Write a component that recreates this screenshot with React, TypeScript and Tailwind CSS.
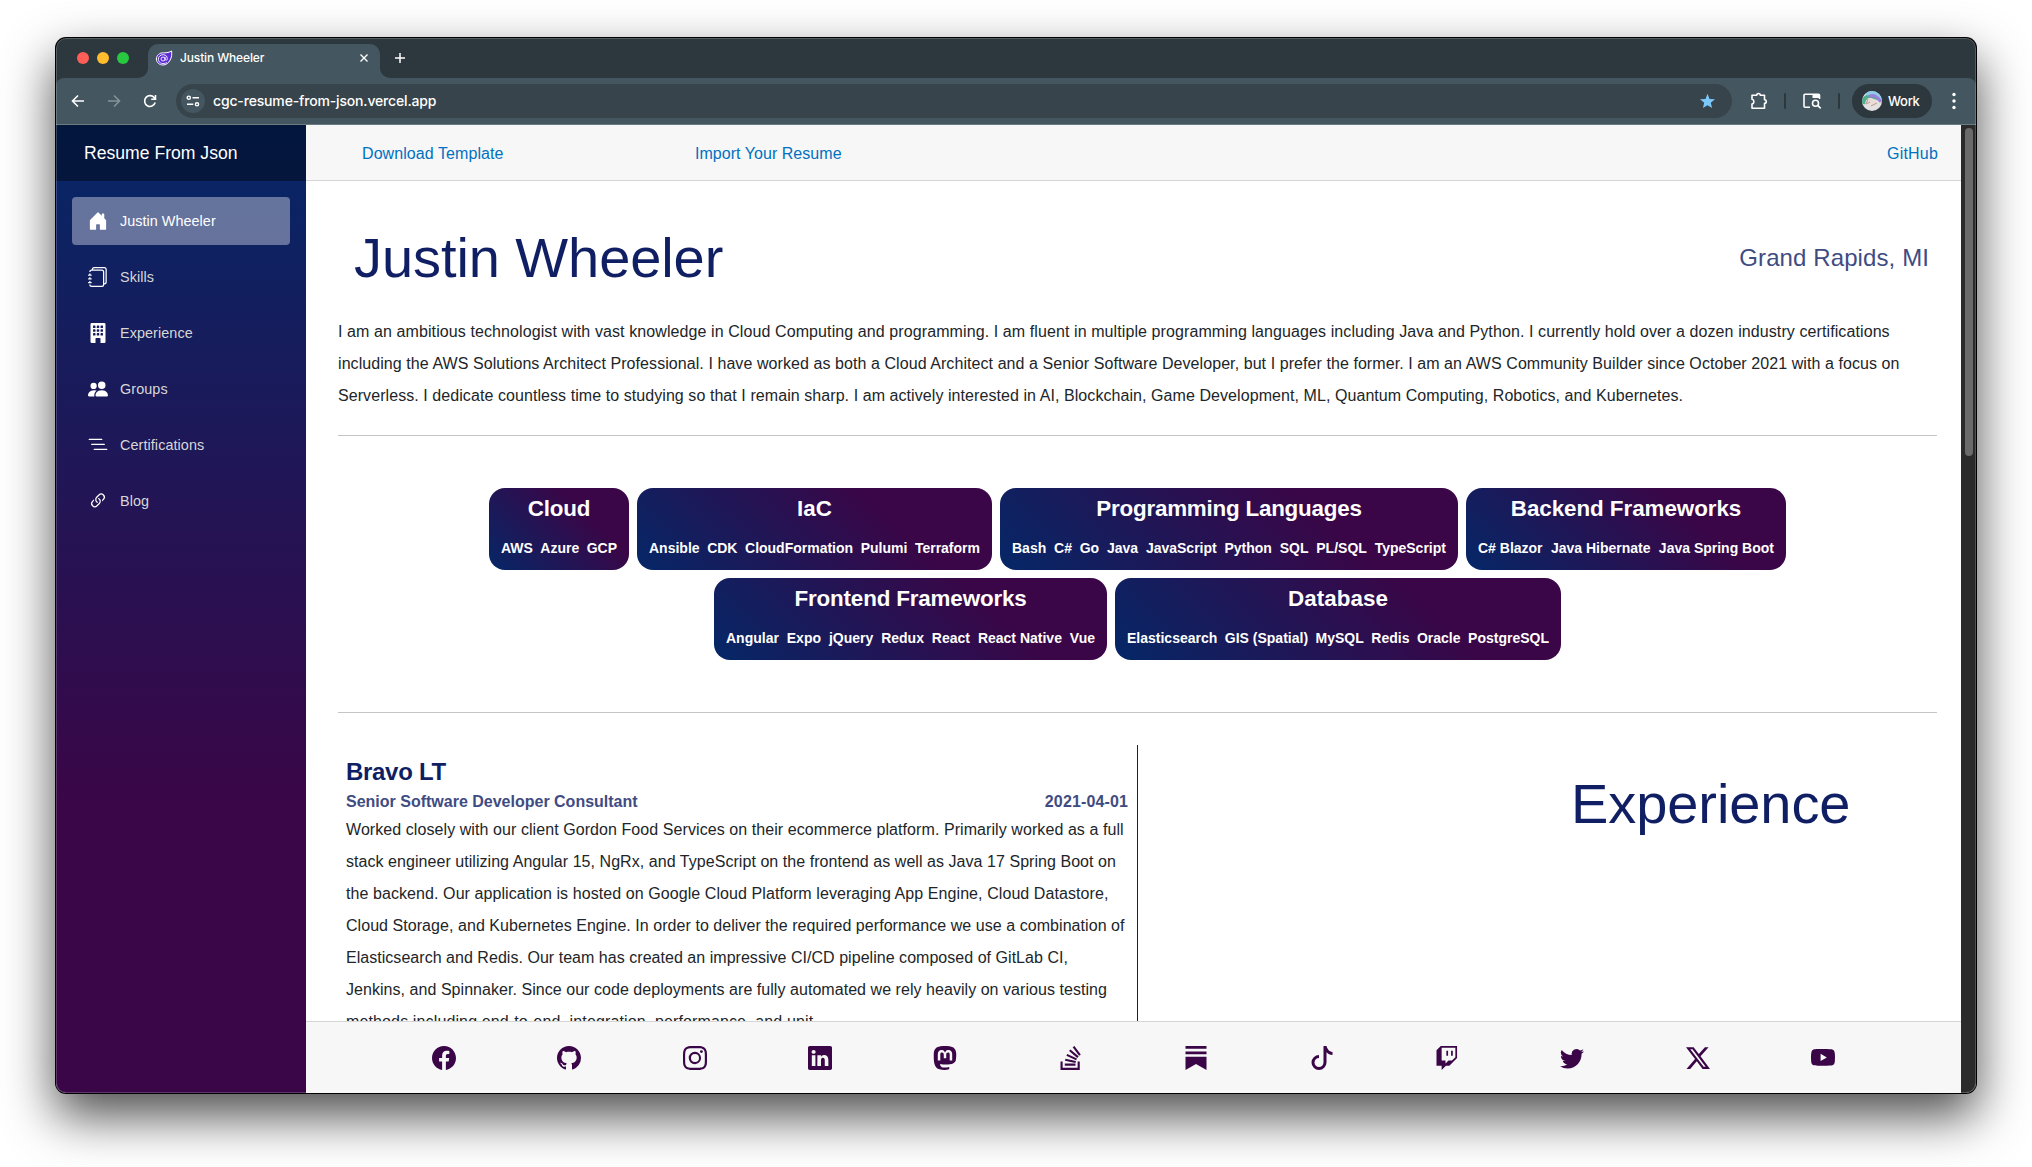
import React from "react";
import {
  BsHouseDoorFill, BsJournals, BsBuildingFill, BsPeopleFill, BsListNested, BsLink45Deg,
  BsFacebook, BsGithub, BsInstagram, BsLinkedin, BsMastodon, BsStackOverflow,
  BsSubstack, BsTiktok, BsTwitch, BsTwitter, BsTwitterX, BsYoutube,
} from "react-icons/bs";

const navItems = [
  { label: "Justin Wheeler", Icon: BsHouseDoorFill, active: true },
  { label: "Skills", Icon: BsJournals },
  { label: "Experience", Icon: BsBuildingFill },
  { label: "Groups", Icon: BsPeopleFill },
  { label: "Certifications", Icon: BsListNested },
  { label: "Blog", Icon: BsLink45Deg },
];

const socials = [
  BsFacebook, BsGithub, BsInstagram, BsLinkedin, BsMastodon, BsStackOverflow,
  BsSubstack, BsTiktok, BsTwitch, BsTwitter, BsTwitterX, BsYoutube,
];

const skillRows = [
  [
    { title: "Cloud", width: "w-[140px]", track: "tracking-[-0.2px]", skills: ["AWS", "Azure", "GCP"] },
    { title: "IaC", width: "w-[355px]", track: "", skills: ["Ansible", "CDK", "CloudFormation", "Pulumi", "Terraform"] },
    { title: "Programming Languages", width: "w-[458px]", track: "tracking-[-0.22px]", skills: ["Bash", "C#", "Go", "Java", "JavaScript", "Python", "SQL", "PL/SQL", "TypeScript"] },
    { title: "Backend Frameworks", width: "w-[320px]", track: "tracking-[-0.06px]", skills: ["C# Blazor", "Java Hibernate", "Java Spring Boot"] },
  ],
  [
    { title: "Frontend Frameworks", width: "w-[393px]", track: "tracking-[-0.16px]", skills: ["Angular", "Expo", "jQuery", "Redux", "React", "React Native", "Vue"] },
    { title: "Database", width: "w-[446px]", track: "tracking-[0.05px]", skills: ["Elasticsearch", "GIS (Spatial)", "MySQL", "Redis", "Oracle", "PostgreSQL"] },
  ],
];

function BlazorIcon() {
  return (
    <svg width="18" height="18" viewBox="0 0 18 18" fill="none">
      <path d="M16.600 2c.3 3.300.2 6.200-1.400 9-1.600 3-4.100 5-7.200 5-3.800 0-6.600-2.600-6.600-6 0-3.700 3.300-6.500 7.300-6.200 3.100.1 5.700-.4 7.900-1.800z" fill="#5b2bd8" stroke="#fff" strokeWidth="1" />
      <path d="M11.500 13.700c-2.800 1.900-7.900 1-8.200-3.400-.1-3 2.600-4.700 5-4.600 2.600.1 4.100 1.900 4 4.100 0 1.800-2.200 1.900-2.200.3V8.200" stroke="#fff" strokeWidth=".9" strokeLinecap="round" />
      <circle cx="8" cy="10" r="2" stroke="#fff" strokeWidth=".9" />
    </svg>
  );
}

function TabStrip() {
  return (
    <div className="flex h-10 bg-[#2c373e]">
      <div className="flex h-10 w-[82px] items-center gap-2 pl-[21px]">
        <span className="size-3 shrink-0 rounded-full bg-[#ff5f57]" />
        <span className="size-3 shrink-0 rounded-full bg-[#febc2e]" />
        <span className="size-3 shrink-0 rounded-full bg-[#28c840]" />
      </div>
      <svg className="mt-[30px] shrink-0" width="10" height="10"><path d="M10 0A10 10 0 0 1 0 10H10z" fill="#44565f" /></svg>
      <div className="mt-[6px] flex h-[34px] w-[232px] items-center rounded-t-[10px] bg-[#44565f] pb-[6px] pl-[7px] pr-[12px]">
        <BlazorIcon />
        <span className="ml-[7px] flex-1 text-[12px] font-medium tracking-[-0.14px] text-white">Justin Wheeler</span>
        <svg width="8" height="8" viewBox="0 0 8 8" stroke="#fff" strokeWidth="1.4"><path d="M.5.5l7 7M7.500.5l-7 7" /></svg>
      </div>
      <svg className="mt-[30px] shrink-0" width="10" height="10"><path d="M0 0A10 10 0 0 0 10 10H0z" fill="#44565f" /></svg>
      <svg className="ml-[5px] mt-[15px]" width="10" height="10" viewBox="0 0 10 10" stroke="#fff" strokeWidth="1.500"><path d="M5 0v10M0 5h10" /></svg>
    </div>
  );
}

function Toolbar() {
  return (
    <div className="bg-[#2c373e]">
      <div className="flex h-[47px] items-center rounded-t-[8px] border-b border-[#6c7a81] bg-[#44565f] text-white">
        <svg className="ml-[15px] shrink-0" width="14" height="14" viewBox="0 0 14 14" fill="none" stroke="#fff" strokeWidth="1.600"><path d="M13 7H2M7 1.500L1.500 7 7 12.500" /></svg>
        <svg className="ml-[22px] shrink-0" width="14" height="14" viewBox="0 0 14 14" fill="none" stroke="#87939a" strokeWidth="1.600"><path d="M1 7h11M7 1.500L12.500 7 7 12.500" /></svg>
        <svg className="ml-[22px] shrink-0" width="14" height="14" viewBox="0 0 14 14" fill="none" stroke="#fff" strokeWidth="1.600"><path d="M12.200 8.600A5.400 5.400 0 1 1 11.500 4L12.400 5M12.500 1V5.300H8.200" /></svg>
        <div className="ml-[19px] flex h-[34px] w-[1556px] shrink-0 items-center rounded-full bg-[#38444b] pl-[5px] pr-[16px]">
          <span className="flex size-6 items-center justify-center rounded-full bg-[#44565f]">
            <svg width="14" height="12" viewBox="0 0 14 12" fill="none" stroke="#fff" strokeWidth="1.400">
              <circle cx="2.800" cy="2.700" r="1.600" /><path d="M6.500 2.700h6.500M1 9.300h6.300" /><circle cx="11" cy="9.300" r="1.600" />
            </svg>
          </span>
          <span className="mb-px ml-[8px] flex-1 text-[14px] font-medium tracking-[-0.16px]">cgc-resume-from-json.vercel.app</span>
          <svg width="17" height="17" viewBox="0 0 17 17"><path d="M8.500 .8l2 5.100 5.500.4-4.200 3.500 1.300 5.300-4.600-2.900-4.600 2.900 1.300-5.300L1 6.300l5.500-.4z" fill="#7cc8f8" /></svg>
        </div>
        <svg className="ml-[18px] shrink-0" width="18" height="18" viewBox="0 0 18 18" fill="none" stroke="#fff" strokeWidth="1.600" strokeLinejoin="round">
          <path d="M2 3.300h4.700a1.800 1.800 0 0 1 3.600 0h4.200v4.500a1.800 1.800 0 0 1 0 3.600v4.800H2v-4.200a2.400 2.400 0 0 0 0-4.700z" />
        </svg>
        <span className="ml-[16px] h-4 w-[2px] shrink-0 rounded-full bg-[#2c373e]" />
        <svg className="ml-[16px] shrink-0" width="20" height="18" viewBox="0 0 20 18" fill="none" stroke="#fff" strokeWidth="1.600">
          <path d="M8 15.200H3a1 1 0 0 1-1-1V3.300a1 1 0 0 1 1-1h13.500a1 1 0 0 1 1 1V7" />
          <path d="M10.500 2.300h7V6h-7z" fill="#fff" stroke="none" />
          <circle cx="13.500" cy="11.200" r="3" /><path d="M15.700 13.400l3 3" />
        </svg>
        <span className="ml-[16px] h-4 w-[2px] shrink-0 rounded-full bg-[#2c373e]" />
        <div className="ml-[12px] flex h-[34px] w-[80px] shrink-0 items-center rounded-full bg-[#2c373e] pl-[10px]">
          <svg width="20" height="20" viewBox="0 0 20 20">
            <clipPath id="avatar"><circle cx="10" cy="10" r="10" /></clipPath>
            <g clipPath="url(#avatar)">
              <path fill="#e3e2e1" d="M0 0h20v20H0z" />
              <path d="M1 13C2 5 7 3 18 8" stroke="#4fae8b" strokeWidth="4" fill="none" />
              <path d="M4 3C9 0 15 1 20 9" stroke="#8ccbe9" strokeWidth="4" fill="none" />
              <path d="M7 6C11 3 15 5 19 11" stroke="#9b7fdc" strokeWidth="3" fill="none" />
              <path d="M5 8c3-2 7-1 11 5l-8 1z" fill="#ecdcd6" />
              <path d="M6 8l-2 5 4-2M9 15l6-3" stroke="#b79b90" strokeWidth="1" fill="none" />
            </g>
          </svg>
          <span className="ml-[6px] mt-px text-[13px] font-medium tracking-[-0.3px]">Work</span>
        </div>
        <svg className="ml-[20px] shrink-0" width="4" height="18" viewBox="0 0 4 18" fill="#fff"><circle cx="2" cy="2.500" r="1.700" /><circle cx="2" cy="9" r="1.700" /><circle cx="2" cy="15.500" r="1.700" /></svg>
      </div>
    </div>
  );
}

function Sidebar() {
  return (
    <aside className="w-[250px] shrink-0 bg-[linear-gradient(180deg,rgb(5,39,103)_0%,#3a0647_70%)]">
      <div className="flex h-14 items-center bg-black/40 pl-[28px] pt-px text-[17.6px] text-white">Resume From Json</div>
      <nav className="flex flex-col gap-2 px-4 pt-4">
        {navItems.map(({ label, Icon, active }) => (
          <a key={label} className={active ? "flex h-12 items-center rounded bg-white/37 pl-4 text-[14.4px] tracking-[0.04px] text-white" : "flex h-12 items-center rounded pl-4 text-[14.4px] tracking-[0.08px] text-[#d7d7d7]"}>
            <Icon className="mb-px mr-3 size-5 text-white" />
            <span className="pt-[2px]">{label}</span>
          </a>
        ))}
      </nav>
    </aside>
  );
}

function SkillCard({ title, width, track, skills }: { title: string; width: string; track: string; skills: string[] }) {
  return (
    <div className={`${width} h-[82px] rounded-2xl bg-[linear-gradient(45deg,rgb(5,39,103)_0%,#3a0647_70%)] pt-[7px] font-bold text-white`}>
      <h3 className={`${track} text-center text-[22.4px] leading-[27px]`}>{title}</h3>
      <div className="mt-3 flex justify-between whitespace-nowrap px-[12px] text-[14px] leading-[28px]">
        {skills.map((s) => <span key={s}>{s}</span>)}
      </div>
    </div>
  );
}

function Resume() {
  return (
    <article className="min-h-0 flex-1 overflow-hidden pl-8 pr-6 text-[#212529]">
      <header className="mt-[43px] flex h-[67px] items-center justify-between pl-[16px] pr-[8px]">
        <h1 className="text-[56px] leading-[67px] tracking-[-0.08px] text-[#101f63]">Justin Wheeler</h1>
        <span className="text-[24px] tracking-[0.1px] text-[#3f4c82]">Grand Rapids, MI</span>
      </header>
      <div className="mt-[25px] whitespace-nowrap text-[16px] leading-8">
        <p className="tracking-[0.095px]">I am an ambitious technologist with vast knowledge in Cloud Computing and programming. I am fluent in multiple programming languages including Java and Python. I currently hold over a dozen industry certifications</p>
        <p className="tracking-[0.071px]">including the AWS Solutions Architect Professional. I have worked as both a Cloud Architect and a Senior Software Developer, but I prefer the former. I am an AWS Community Builder since October 2021 with a focus on</p>
        <p className="tracking-[0.07px]">Serverless. I dedicate countless time to studying so that I remain sharp. I am actively interested in AI, Blockchain, Game Development, ML, Quantum Computing, Robotics, and Kubernetes.</p>
      </div>
      <hr className="mt-[23px] border-[#c4c5c6]" />
      <section className="mt-[52px] flex flex-col gap-2">
        {skillRows.map((row, i) => (
          <div key={i} className="flex justify-center gap-2">
            {row.map((card) => <SkillCard key={card.title} {...card} />)}
          </div>
        ))}
      </section>
      <hr className="mt-[52px] border-[#c4c5c6]" />
      <section className="mt-8 flex">
        <div className="h-[400px] w-[800px] border-r border-[#101f63] pl-2 pr-[9px] pt-[13px]">
          <h2 className="h-8 text-[24px] font-bold leading-[28.8px] tracking-[-0.3px] text-[#101f63]">Bravo LT</h2>
          <div className="flex justify-between text-[16px] font-bold leading-6 text-[#3f4c82]">
            <span>Senior Software Developer Consultant</span>
            <span className="tracking-[0.13px]">2021-04-01</span>
          </div>
          <div className="whitespace-nowrap text-[16px] leading-8">
            <p className="tracking-[0.074px]">Worked closely with our client Gordon Food Services on their ecommerce platform. Primarily worked as a full</p>
            <p className="tracking-[0.05px]">stack engineer utilizing Angular 15, NgRx, and TypeScript on the frontend as well as Java 17 Spring Boot on</p>
            <p className="tracking-[0.08px]">the backend. Our application is hosted on Google Cloud Platform leveraging App Engine, Cloud Datastore,</p>
            <p className="tracking-[0.053px]">Cloud Storage, and Kubernetes Engine. In order to deliver the required performance we use a combination of</p>
            <p className="tracking-[0.035px]">Elasticsearch and Redis. Our team has created an impressive CI/CD pipeline composed of GitLab CI,</p>
            <p className="tracking-[0.047px]">Jenkins, and Spinnaker. Since our code deployments are fully automated we rely heavily on various testing</p>
            <p className="tracking-[0.13px]">methods including end-to-end, integration, performance, and unit.</p>
          </div>
        </div>
        <h1 className="pl-[433px] pt-[25px] text-[56px] leading-[67px] tracking-[-0.08px] text-[#101f63]">Experience</h1>
      </section>
    </article>
  );
}

export default function App() {
  return (
    <div className="h-[1167px] w-[2032px] overflow-hidden bg-white pl-[55px] pt-[37px] font-['Inter',sans-serif]">
      <div className="h-[1057px] w-[1922px] rounded-[11px] bg-black p-px shadow-[0_22px_50px_rgba(0,0,0,0.7)]">
        <div className="relative flex h-full flex-col overflow-hidden rounded-[10px]">
          <TabStrip />
          <Toolbar />
          <div className="flex min-h-0 flex-1 bg-white font-['Liberation_Sans',Arial,sans-serif]">
            <Sidebar />
            <main className="flex min-w-0 flex-1 flex-col">
              <div className="flex h-14 shrink-0 items-center border-b border-[#d6d5d5] bg-[#f7f7f7] pl-[56px] pr-[23px] pt-[2px] text-[16px] text-[#0071c1]">
                <a className="w-[333px] tracking-[0.08px]">Download Template</a>
                <a className="flex-1 tracking-[0.04px]">Import Your Resume</a>
                <a className="tracking-[0.2px]">GitHub</a>
              </div>
              <Resume />
              <footer className="flex h-[72px] shrink-0 items-center justify-between border-t border-[#d6d5d5] bg-[#f7f7f7] pl-[126px] pr-[126px] pt-px text-[#3a0647]">
                {socials.map((Icon, i) => <Icon key={i} className="size-6" />)}
              </footer>
            </main>
            <div className="w-[15px] shrink-0 bg-[#2b2b2b] pl-1 pt-[3px]">
              <div className="h-[328px] w-2 rounded-full bg-[#6b6b6b]" />
            </div>
          </div>
          <div className="pointer-events-none absolute inset-0 rounded-[10px] border border-white/20" />
        </div>
      </div>
    </div>
  );
}
